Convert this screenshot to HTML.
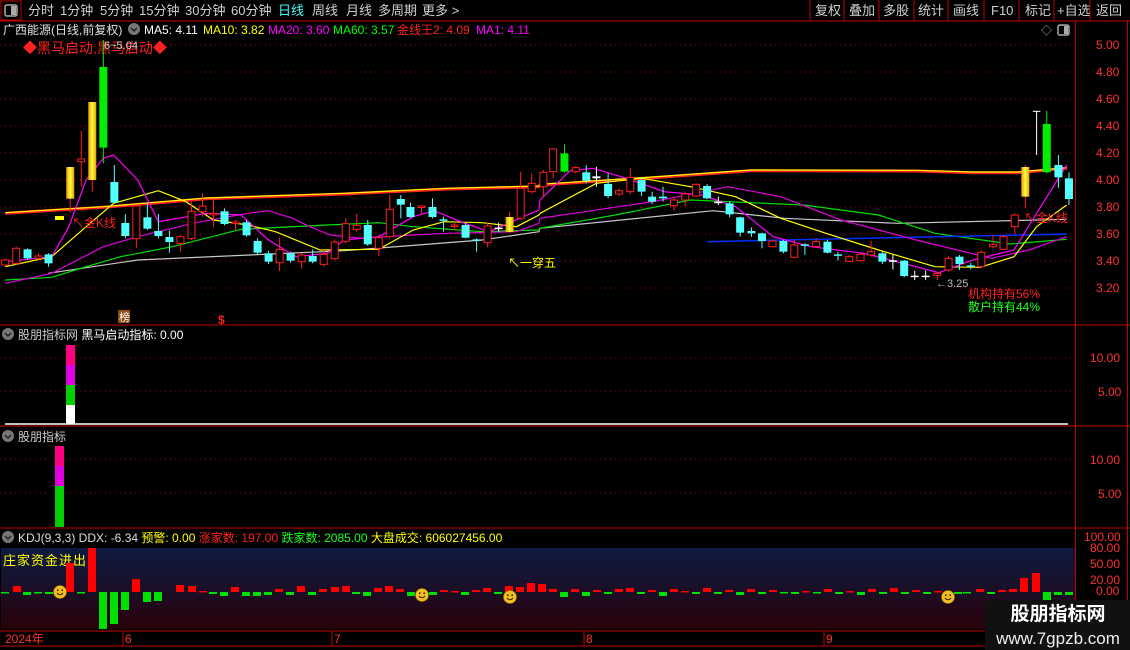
<!DOCTYPE html>
<html><head><meta charset="utf-8"><style>
html,body{margin:0;padding:0;background:#000;width:1130px;height:650px;overflow:hidden}
body{font-family:"Liberation Sans","Noto Sans CJK SC",sans-serif}
svg{display:block}
svg text{font-family:"Liberation Sans","Noto Sans CJK SC",sans-serif}
</style></head><body>
<svg id="s" width="1130" height="650" xmlns="http://www.w3.org/2000/svg">
<defs>
<linearGradient id="kg" x1="0" y1="0" x2="0" y2="1"><stop offset="0" stop-color="#0e1a40"/><stop offset="0.5" stop-color="#1a0f28"/><stop offset="1" stop-color="#2a0008"/></linearGradient>
<linearGradient id="yg" x1="0" y1="0" x2="1" y2="0"><stop offset="0" stop-color="#e8a000"/><stop offset="0.5" stop-color="#ffff40"/><stop offset="1" stop-color="#e8a000"/></linearGradient>
</defs>
<rect width="1130" height="650" fill="#000"/>
<rect x="1" y="1" width="20" height="19" fill="none" stroke="#c00000"/>
<rect x="5" y="5" width="12" height="11" rx="2" fill="none" stroke="#aaa" stroke-width="1.5"/><rect x="11" y="6" width="5" height="9" fill="#aaa"/>
<g font-size="13" fill="#d0d0d0">
<text x="28" y="15">分时</text><text x="60" y="15">1分钟</text><text x="100" y="15">5分钟</text><text x="139" y="15">15分钟</text><text x="185" y="15">30分钟</text><text x="231" y="15">60分钟</text>
<text x="278" y="15" fill="#40ffff">日线</text><text x="312" y="15">周线</text><text x="346" y="15">月线</text><text x="378" y="15">多周期</text><text x="422" y="15">更多 &gt;</text>
<text x="815" y="15">复权</text><text x="849" y="15">叠加</text><text x="883" y="15">多股</text><text x="918" y="15">统计</text><text x="953" y="15">画线</text><text x="991" y="15">F10</text><text x="1025" y="15">标记</text><text x="1057" y="15">+自选</text><text x="1096" y="15">返回</text>
</g>
<g stroke="#c00000"><line x1="810" y1="0" x2="810" y2="21"/><line x1="844" y1="0" x2="844" y2="21"/><line x1="879" y1="0" x2="879" y2="21"/><line x1="914" y1="0" x2="914" y2="21"/><line x1="948" y1="0" x2="948" y2="21"/><line x1="984" y1="0" x2="984" y2="21"/><line x1="1019" y1="0" x2="1019" y2="21"/><line x1="1054" y1="0" x2="1054" y2="21"/><line x1="1090" y1="0" x2="1090" y2="21"/>
<line x1="0" y1="21" x2="1130" y2="21"/><line x1="0" y1="325" x2="1130" y2="325"/><line x1="0" y1="426" x2="1130" y2="426"/><line x1="0" y1="528" x2="1130" y2="528"/><line x1="0" y1="631" x2="985" y2="631"/><line x1="0" y1="646" x2="985" y2="646"/>
<line x1="1075.5" y1="21" x2="1075.5" y2="631"/><line x1="1127.5" y1="21" x2="1127.5" y2="600"/></g>
<g id="grid"></g>
<g font-size="12">
<text x="3" y="34" fill="#e0e0e0">广西能源(日线,前复权)</text>
<circle cx="134" cy="29" r="6" fill="#777"/><path d="M131 28l3 3 3-3" stroke="#222" fill="none" stroke-width="1.5"/>
<text x="144" y="34" fill="#fff">MA5: 4.11</text><text x="203" y="34" fill="#ffff00">MA10: 3.82</text><text x="268" y="34" fill="#ff00ff">MA20: 3.60</text><text x="333" y="34" fill="#00ff00">MA60: 3.57</text><text x="397" y="34" fill="#ff2020">金线王2: 4.09</text><text x="476" y="34" fill="#ff00ff">MA1: 4.11</text>
</g>
<text x="1041" y="34" font-size="11" fill="#aaa">◇</text>
<rect x="1058" y="25" width="11" height="10" rx="2" fill="none" stroke="#aaa" stroke-width="1.5"/><rect x="1064" y="26" width="4" height="8" fill="#aaa"/>
<text x="23" y="53" font-size="14" fill="#ff2020">◆黑马启动,黑马启动◆</text>
<text x="104" y="49" font-size="11" fill="#ccc">6~5.04</text>
<g id="lines"></g>
<g id="cand"></g>
<rect x="55" y="216" width="9" height="4" fill="#ffff00"/>
<text x="72" y="227" font-size="12" fill="#ff2020">↖金K线</text>
<text x="1024" y="222" font-size="12" fill="#ff2020">↖金K线</text>
<text x="508" y="267" font-size="12" fill="#ffff00">↖一穿五</text>
<text x="936" y="287" font-size="11" fill="#bbb">←3.25</text>
<text x="968" y="298" font-size="12" fill="#ff2020">机构持有56%</text>
<text x="968" y="311" font-size="12" fill="#20ff20">散户持有44%</text>
<rect x="118" y="310" width="12" height="13" fill="#8a4a10"/><text x="119" y="321" font-size="11" fill="#fff">榜</text>
<text x="218" y="324" font-size="12" fill="#ff2020" font-weight="bold">$</text>
<g font-size="12" fill="#ff3030" id="pax"></g>
<circle cx="8" cy="334" r="6" fill="#777"/><path d="M5 333l3 3 3-3" stroke="#222" fill="none" stroke-width="1.5"/>
<text x="18" y="339" font-size="12" fill="#ccc">股朋指标网 <tspan fill="#fff">黑马启动指标: 0.00</tspan></text>
<rect x="66" y="345" width="9" height="20" fill="#ff0080"/><rect x="66" y="365" width="9" height="20" fill="#e000e0"/><rect x="66" y="385" width="9" height="20" fill="#00d000"/><rect x="66" y="405" width="9" height="19" fill="#fff"/>
<line x1="5" y1="424" x2="1068" y2="424" stroke="#fff" stroke-width="1.5"/>
<circle cx="8" cy="436" r="6" fill="#777"/><path d="M5 435l3 3 3-3" stroke="#222" fill="none" stroke-width="1.5"/>
<text x="18" y="441" font-size="12" fill="#ccc">股朋指标</text>
<rect x="55" y="446" width="9" height="20" fill="#ff0080"/><rect x="55" y="466" width="9" height="20" fill="#e000e0"/><rect x="55" y="486" width="9" height="41" fill="#00d000"/>
<g font-size="12" fill="#ff3030"><text x="1090" y="362">10.00</text><text x="1098" y="396">5.00</text><text x="1090" y="464">10.00</text><text x="1098" y="498">5.00</text>
<text x="1084" y="541">100.00</text><text x="1090" y="552">80.00</text><text x="1090" y="568">50.00</text><text x="1090" y="584">20.00</text><text x="1096" y="595">0.00</text></g>
<circle cx="8" cy="537" r="6" fill="#777"/><path d="M5 536l3 3 3-3" stroke="#222" fill="none" stroke-width="1.5"/>
<text x="18" y="542" font-size="12" fill="#ddd">KDJ(9,3,3) DDX: -6.34 <tspan fill="#ffff00">预警: 0.00</tspan> <tspan fill="#ff2020">涨家数: 197.00</tspan> <tspan fill="#20ff20">跌家数: 2085.00</tspan> <tspan fill="#ffff00">大盘成交: 606027456.00</tspan></text>
<rect x="1" y="548" width="1074" height="81" fill="url(#kg)"/>
<text x="3" y="565" font-size="13" fill="#ffff00" letter-spacing="1">庄家资金进出</text>
<g id="kb"></g>
<g font-size="12" fill="#ff3030"><text x="5" y="643">2024年</text><text x="125" y="643">6</text><text x="334" y="643">7</text><text x="586" y="643">8</text><text x="826" y="643">9</text></g>
<g stroke="#c00000"><line x1="123" y1="631" x2="123" y2="646"/><line x1="332" y1="631" x2="332" y2="646"/><line x1="584" y1="631" x2="584" y2="646"/><line x1="824" y1="631" x2="824" y2="646"/></g>
<rect x="985" y="600" width="145" height="50" fill="#111"/>
<text x="1058" y="620" font-size="19" fill="#fff" text-anchor="middle" font-weight="bold">股朋指标网</text>
<text x="1058" y="644" font-size="17" fill="#eee" text-anchor="middle">www.7gpzb.com</text>
</svg>
<script>
var NS="http://www.w3.org/2000/svg";
function el(p,t,a){var e=document.createElementNS(NS,t);for(var k in a)e.setAttribute(k,a[k]);document.getElementById(p).appendChild(e);return e;}
for(var i=0;i<10;i++){var y=45+i*27;el("grid","line",{x1:0,y1:y,x2:1072,y2:y,stroke:"#a00000","stroke-dasharray":"1 4"});}
[358,391,459,493].forEach(function(y){el("grid","line",{x1:0,y1:y,x2:1072,y2:y,stroke:"#a00000","stroke-dasharray":"1 4"});});
var labs=["5.00","4.80","4.60","4.40","4.20","4.00","3.80","3.60","3.40","3.20"];
labs.forEach(function(l,i){var t=el("pax","text",{x:1096,y:49+i*27});t.textContent=l;});
function cx5(z){return z/2.904;} function cx6(z){return 540+z/2.658;} function cy(z){return 40+z/3;}
function line(pts,f,col,w){var s=pts.map(function(p){return f(p[0]).toFixed(1)+","+cy(p[1]).toFixed(1);}).join(" ");el("lines","polyline",{points:s,fill:"none",stroke:col,"stroke-width":w||1.2});}
function line2(a,b,col,w){var s=a.map(function(p){return cx5(p[0]).toFixed(1)+","+cy(p[1]).toFixed(1);}).concat(b.map(function(p){return cx6(p[0]).toFixed(1)+","+cy(p[1]).toFixed(1);})).join(" ");el("lines","polyline",{points:s,fill:"none",stroke:col,"stroke-width":w||1.2});}
line2([[15,520],[300,502],[600,476],[1000,462],[1300,447],[1565,440]],[[0,435],[300,413],[560,392],[1000,393],[1150,398],[1270,398],[1400,385]],"#ff2020",3);
line2([[15,518],[300,500],[600,474],[1000,460],[1300,445],[1565,438]],[[0,433],[300,411],[560,390],[1000,391],[1150,396],[1270,396],[1400,383]],"#ffff00",1.2);
line2([[140,700],[400,660],[1000,632],[1400,600],[1565,575]],[[0,565],[460,512],[650,535],[950,550],[1400,538]],"#c8c8c8");
line2([[15,720],[150,712],[250,680],[350,650],[500,620],[700,568],[950,555],[1100,548],[1200,560],[1400,575],[1565,570]],[[0,565],[200,525],[400,480],[700,495],[900,525],[1050,580],[1250,612],[1400,598]],"#00e000");
line([[445,605],[1400,582]],cx6,"#0030ff",1.5);
line2([[15,730],[150,700],[300,620],[400,590],[560,550],[720,520],[780,512],[850,535],[900,560],[960,585],[1050,595],[1200,585],[1300,580],[1500,575],[1565,550]],[[0,535],[300,485],[500,440],[640,470],[800,540],[1000,600],[1200,655],[1300,630],[1400,590]],"#e000e0");
line2([[15,680],[150,650],[250,560],[330,490],[460,452],[540,485],[620,540],[720,555],[800,575],[930,630],[1100,628],[1200,570],[1290,545],[1400,548],[1500,560],[1565,525]],[[0,520],[150,430],[270,415],[400,440],[520,470],[640,535],[760,580],[900,630],[1050,680],[1170,682],[1260,650],[1320,560],[1400,495]],"#ffff00");
line2([[15,665],[150,650],[200,560],[250,420],[300,355],[330,345],[400,420],[460,545],[600,520],[700,525],[780,600],[860,650],[950,640],[1000,600],[1100,590],[1200,530],[1260,512],[1350,550],[1420,575],[1565,510]],[[0,480],[80,392],[140,385],[230,415],[330,455],[430,465],[520,500],[620,590],[720,620],[860,640],[1000,680],[1060,698],[1150,660],[1260,630],[1320,520],[1400,375]],"#ff00ff");
var C={r:"#ff2020",c:"#54ffff",g:"#00ee00",y:"url(#yg)",w:"#ffffff"};
function cand(x,t,b,col,wt,wb){var w=8;var c=C[col];
 el("cand","line",{x1:x,y1:cy(wt),x2:x,y2:cy(wb),stroke:col=="y"?"#ff2020":c});
 var h=Math.max(cy(b)-cy(t),1.5);
 if(col=="r")el("cand","rect",{x:x-w/2+0.5,y:cy(t),width:w-1,height:h,fill:"#000",stroke:c});
 else el("cand","rect",{x:x-w/2,y:cy(t),width:w,height:h,fill:c});}
var A=[[15,660,675,"r",655,680],[47,625,670,"r",620,675],[80,628,655,"c",625,660],[112,648,655,"r",640,660],[141,643,670,"c",640,680],[204,381,476,"y",381,518],[236,357,365,"r",273,440],[268,186,420,"y",186,455],[300,81,323,"g",0,370],[332,426,488,"c",375,490],[364,549,588,"c",522,595],[396,498,596,"r",498,623],[428,532,566,"c",490,570],[460,573,588,"c",522,595],[492,591,606,"c",572,638],[524,590,610,"r",585,635],[556,514,596,"r",485,600],[588,498,515,"r",460,530],[620,520,524,"r",478,560],[652,514,552,"c",505,556],[684,546,550,"r",540,570],[716,547,586,"c",540,590],[748,603,638,"c",595,642],[780,640,665,"c",632,672],[812,628,668,"r",592,693],[844,640,662,"c",635,668],[876,645,665,"r",640,686],[908,648,665,"c",628,670],[940,643,673,"r",630,680],[972,606,656,"r",598,660],[1004,551,604,"r",535,610],[1036,556,568,"r",522,575],[1068,555,613,"c",540,618],[1100,593,625,"r",585,648],[1132,508,590,"r",465,595],[1164,477,494,"c",465,535],[1192,501,531,"c",488,534],[1224,498,502,"r",498,522],[1256,501,531,"c",475,535],[1288,538,542,"c",530,575],[1320,555,559,"r",545,570],[1352,555,593,"c",550,595],[1384,598,602,"c",595,635],[1416,558,608,"r",548,622],[1448,563,567,"w",548,575],[1480,531,576,"y",515,578],[1512,445,535,"r",395,540],[1544,430,455,"r",400,460]];
A.forEach(function(a){cand(cx5(a[0]),a[1],a[2],a[3],a[4],a[5]);});
var B=[[9,397,440,"r",390,470],[35,327,395,"r",325,415],[65,340,395,"g",313,398],[95,383,395,"r",378,400],[123,397,422,"c",375,430],[150,409,415,"w",380,440],[181,432,468,"c",400,475],[210,452,462,"r",445,468],[240,412,455,"r",385,462],[270,420,455,"c",412,468],[298,470,485,"c",455,492],[327,470,475,"c",440,485],[356,480,497,"r",472,512],[386,462,480,"r",455,498],[415,433,468,"r",430,470],[444,438,475,"c",432,478],[474,485,487,"w",470,495],[504,490,523,"c",485,532],[532,532,578,"c",530,590],[562,573,580,"c",562,590],[590,580,603,"c",578,625],[618,603,620,"r",600,622],[647,603,635,"c",600,640],[676,615,652,"r",600,655],[704,613,617,"c",610,645],[734,605,620,"r",595,622],[764,605,638,"c",600,640],[792,643,647,"c",635,662],[822,650,664,"r",645,666],[852,643,662,"r",640,665],[880,635,645,"r",603,650],[910,640,665,"c",635,672],[938,661,665,"w",645,688],[968,662,708,"c",660,712],[996,707,710,"w",692,720],[1025,707,710,"w",692,720],[1056,700,706,"r",696,720],[1086,655,690,"r",648,695],[1115,650,672,"c",645,690],[1145,676,680,"c",668,688],[1173,637,680,"r",630,685],[1204,613,620,"r",585,625],[1232,590,628,"r",585,630],[1262,525,560,"r",520,582],[1290,381,470,"y",375,505],[1347,252,397,"g",213,400],[1378,375,412,"c",345,443],[1406,415,477,"c",397,495]];
B.forEach(function(a){cand(cx6(a[0]),a[1],a[2],a[3],a[4],a[5]);});
el("cand","line",{x1:cx6(1320),y1:cy(214),x2:cx6(1320),y2:cy(345),stroke:"#fff"});
el("cand","line",{x1:cx6(1310),y1:cy(214),x2:cx6(1330),y2:cy(214),stroke:"#fff"});
var base=592;
function kb(x,y,w){var col=y<base?"#ff0000":"#00e000";el("kb","rect",{x:x-4,y:Math.min(y,base),width:w||8,height:Math.max(Math.abs(y-base),1.5),fill:col});}
var K=[[5,593],[17,586],[27,595],[38,593],[49,594],[70,563],[81,593],[92,548],[103,629],[114,624],[125,610],[136,579],[147,602],[158,601],[180,585],[192,586],[203,591],[213,594],[224,596],[235,587],[246,596],[257,596],[268,595],[279,589],[290,595],[301,586],[312,595],[323,589],[335,587],[346,586],[356,594],[367,596],[378,588],[389,586],[400,589],[411,596],[433,595],[444,590],[455,591],[465,595],[476,590],[487,588],[498,594],[509,586],[520,587],[531,583],[542,584],[553,589],[564,597],[575,589],[586,596],[597,590],[608,594],[619,589],[630,588],[641,594],[652,590],[663,596],[674,589],[685,591],[696,594],[707,588],[718,594],[729,590],[740,595],[751,589],[762,594],[773,590],[784,592],[795,594],[806,591],[817,593],[828,589],[839,594],[850,591],[861,595],[872,589],[883,594],[894,588],[905,594],[916,590],[927,594],[938,591],[958,594],[967,593],[980,589],[991,594],[1002,590],[1013,589],[1024,578],[1036,573],[1047,600],[1058,595],[1069,595]];
K.forEach(function(k){kb(k[0],k[1]);});
function smile(x,y){el("kb","circle",{cx:x,cy:y,r:6.5,fill:"#f0c020",stroke:"#a07000","stroke-width":0.6});el("kb","circle",{cx:x-2.2,cy:y-1.8,r:0.9,fill:"#402000"});el("kb","circle",{cx:x+2.2,cy:y-1.8,r:0.9,fill:"#402000"});el("kb","path",{d:"M"+(x-3)+" "+(y+1)+"q3 3.5 6 0",stroke:"#402000",fill:"none","stroke-width":1});}
smile(60,592);smile(422,595);smile(510,597);smile(948,597);
</script>
</body></html>
